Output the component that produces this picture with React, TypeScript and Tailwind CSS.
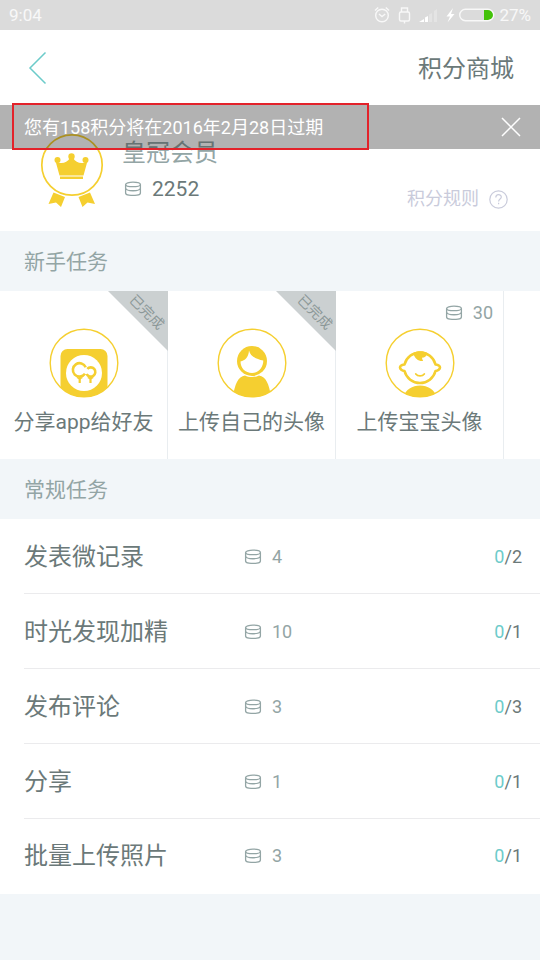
import React from 'react';

const newbieTasks = [
  { title: '分享app给好友', icon: 'app', done: true, points: 0 },
  { title: '上传自己的头像', icon: 'mother', done: true, points: 0 },
  { title: '上传宝宝头像', icon: 'baby', done: false, points: 30 },
];

const dailyTasks = [
  { title: '发表微记录', points: 4, current: 0, total: 2 },
  { title: '时光发现加精', points: 10, current: 0, total: 1 },
  { title: '发布评论', points: 3, current: 0, total: 3 },
  { title: '分享', points: 1, current: 0, total: 1 },
  { title: '批量上传照片', points: 3, current: 0, total: 1 },
];

const CoinIcon = () => (
  <svg width="18" height="16" viewBox="0 0 18 16" fill="none" stroke="#93a5a5" strokeWidth="1.3" aria-hidden="true">
    <ellipse cx="9" cy="3.4" rx="7.4" ry="2.3" />
    <path d="M1.6 3.4v8.6c0 1.3 1.2 2 3.400 2.200 2.600.3 5.400.3 8 0 2.200-.2 3.400-.9 3.400-2.200V3.400" />
    <path d="M1.600 7.400c.8 3.100 14 3.100 14.800 0" />
  </svg>
);

const StatusBar = () => (
  <div className="flex h-[30px] items-center justify-between bg-[#dbdbdb] px-[9px] text-[17px] leading-5 font-normal text-white/80">
    <span>9:04</span>
    <div className="flex items-center">
      <svg width="126" height="20" viewBox="0 0 126 20" fill="none" stroke="#f8f8f8" strokeWidth="1.4" aria-hidden="true">
        {/* Alarm */}
        <circle cx="9" cy="10.500" r="6.300" />
        <path d="M6 9l3 2.600L12.200 9M2 5.500l3.200-3M16 5.500l-3.200-3" />
        {/* Lock */}
        <rect x="26.500" y="7" width="10" height="9" rx="1.500" />
        <path d="M28.500 7V3h6v4M31.500 16v2.500" />
        {/* Signal */}
        <g fill="#fff" stroke="none">
          <path d="M46 17l5-3v3z" />
          <path d="M52 17v-4.500l3-1.500V17z" />
          <path opacity=".25" d="M56 17v-7.500l3-1.500V17zM61 17V6l3-2v13z" />
        </g>
        {/* Charging */}
        <path fill="#fff" stroke="none" d="M80 3l-6.500 8.500h3.500L74.500 17.500l7-8.500h-3.500z" />
        <path fill="#43c20a" stroke="none" d="M111 5h4.500a5 5 0 0 1 0 10H111z" />
        <rect x="86.700" y="4.200" width="34" height="11.600" rx="5.800" />
      </svg>
      <span>27%</span>
    </div>
  </div>
);

const MedalIcon = () => (
  <svg width="64" height="76" viewBox="0 0 64 76" fill="#f5cf30" aria-hidden="true">
    <circle cx="32" cy="32" r="30.200" fill="none" stroke="#f5cf30" strokeWidth="1.700" />
    <circle cx="17.500" cy="27" r="3" />
    <circle cx="31.500" cy="23.500" r="3.200" />
    <circle cx="45.500" cy="27" r="3" />
    <path d="M15.500 28c5 3.500 11 2.500 14.500-3h3c3.500 5.500 9.500 6.500 14.500 3l-4 14.500h-24zM20 43.500h23V46H20z" />
    <path d="M13.500 59.500l11.500 4.500-4 10-5-4.500-7.500 1.500zM50 59.500L38.500 64l4 10 5-4.500L55 71z" />
  </svg>
);

const TaskIcon = ({ name }: { name: string }) => (
  <svg width="70" height="70" viewBox="0 0 70 70" fill="#f5cf30" aria-hidden="true">
    <defs>
      <clipPath id={`clip-${name}`}>
        <circle cx="35" cy="35" r="34" />
      </clipPath>
    </defs>
    <circle cx="35" cy="35" r="33.800" fill="none" stroke="#f5cf30" strokeWidth="1.400" />
    <g clipPath={`url(#clip-${name})`}>
      {name === 'app' && (
        <>
          <rect x="11.500" y="21" width="47" height="60" rx="7" />
          <circle cx="35" cy="45" r="18" fill="#fff" />
          <g fill="none" stroke="#f5cf30" strokeWidth="2.600">
            <path d="M36 45.800A6.700 6.700 0 1 1 36.700 39.200" />
            <path d="M38.300 40.900A4.600 4.600 0 1 1 37.600 46" />
            <path strokeWidth="2.200" d="M30.700 48v7M41.500 48v7" />
            <path strokeWidth="1.400" d="M28 49.300l2.700 1.700 2.700-1.700M38.800 49.300l2.700 1.700 2.700-1.700" />
          </g>
        </>
      )}
      {name === 'mother' && (
        <>
          <circle cx="35" cy="33" r="15" />
          <path fill="#fff" d="M23.500 33.500c4.500-1 8-4 8.500-11 1 5 5.500 8 14.300 10 0 6.500-4.500 12.500-11.300 12.500s-11.500-5-11.500-11.500z" />
          <path d="M16 68c2-12 5-19.500 12-20.500 4 2 10 2 14 0 7 1 10 8.500 12 20.500v4H16z" />
        </>
      )}
      {name === 'baby' && (
        <>
          <path
            fill="none"
            stroke="#f5cf30"
            strokeWidth="2.600"
            strokeLinejoin="round"
            d="M19.500 36.500a16 16 0 0 1 31 0c2.500.3 4.500 1.600 4.500 3s-2 3.200-4.500 3.500a16 16 0 0 1-31 0c-2.500-.3-4.500-2.100-4.500-3.500s2-2.700 4.500-3z"
          />
          <path d="M28 25c4-2.500 11-2.500 14.500 0-1.200 3.500-3 4.800-5.500 4.800.2 1.200.5 2.200 1.200 3.200-4.700.5-8.200-2-10.200-8z" />
          <path fill="none" stroke="#f5cf30" strokeWidth="1.800" strokeLinecap="round" d="M30.800 46c2 2.600 6.500 2.600 8.500 0" />
          <path d="M18 70c2-8 9-12.500 17-12.500S50 62 52 70z" />
        </>
      )}
    </g>
  </svg>
);

const SectionTitle = ({ children }: { children: React.ReactNode }) => (
  <h2 className="flex h-[60px] items-center bg-[#f2f6f9] px-6 pt-0.5 text-[21px] leading-6 text-[#93a5a5]">{children}</h2>
);

const App = () => {
  return (
    <div className="min-h-screen bg-[#f2f6f9] font-['Roboto','Noto_Sans_CJK_SC',sans-serif] font-[370] text-[#6b7979]">
      <StatusBar />

      {/* Header */}
      <header className="flex h-[75px] items-center justify-between bg-white px-[26px]">
        <button type="button" aria-label="返回">
          <svg width="24" height="34" viewBox="0 0 24 34" fill="none" stroke="#6ccbca" strokeWidth="1.500">
            <path d="M19.500 1.500L4 17l15.500 15.500" />
          </svg>
        </button>
        <h1 className="pt-0.5 text-2xl leading-8">积分商城</h1>
      </header>

      {/* Member profile */}
      <section className="relative bg-white">
        <div className="flex h-[126px] items-start pr-8 pl-10 pt-7">
          <MedalIcon />
          <div className="ml-[18px] flex-1">
            <p className="text-2xl leading-10 text-[#93a5a5]">皇冠会员</p>
            <p className="flex items-center gap-2.5 pl-0.5 text-[21px] leading-8">
              <CoinIcon />
              2252
            </p>
          </div>
          <button type="button" className="mt-[52px] flex items-center gap-2.5 text-lg leading-7 text-[#c9cbdb]">
            积分规则
            <svg width="19" height="19" viewBox="0 0 19 19" fill="none" stroke="#c9cbdb" strokeWidth="1.200" aria-hidden="true">
              <circle cx="9.500" cy="9.500" r="8.700" />
              <path d="M6.800 7.500c0-3.800 5.500-3.600 5.500-.4 0 2-2.700 2-2.700 4.400M9.600 12.800v1.500" />
            </svg>
          </button>
        </div>

        {/* Expiry notice */}
        <div className="absolute inset-x-0 top-0 flex h-11 items-center justify-between bg-black/30 pr-[18px] pl-6 text-lg leading-6 text-white">
          <span className="pt-0.5">您有158积分将在2016年2月28日过期</span>
          <button type="button" aria-label="关闭">
            <svg width="22" height="22" viewBox="0 0 22 22" stroke="#fff" strokeWidth="1.500">
              <path d="M2 2l18 18M20 2L2 20" />
            </svg>
          </button>
        </div>
        <div className="pointer-events-none absolute -top-0.5 left-3 h-[47px] w-[357px] border-2 border-[#e3222a]" />
      </section>

      <SectionTitle>新手任务</SectionTitle>

      {/* Newbie tasks */}
      <div className="flex overflow-hidden bg-white">
        {newbieTasks.map((task) => (
          <div
            key={task.title}
            className="relative flex h-[168px] w-[168px] shrink-0 flex-col items-center border-r border-[#e9edf0] pt-[37px]"
          >
            <TaskIcon name={task.icon} />
            <p className="mt-2 text-[21px] leading-8 whitespace-nowrap">{task.title}</p>
            {task.done ? (
              <span className="absolute top-0 -right-px flex size-[60px] items-center justify-center bg-[#cbd0d1] pb-[18px] pl-[18px] [clip-path:polygon(0_0,100%_0,100%_100%)]">
                <span className="rotate-45 text-sm leading-5 whitespace-nowrap text-[#8b9898]">已完成</span>
              </span>
            ) : (
              <span className="absolute top-2.5 right-2.5 flex items-center gap-2.5 text-lg leading-6 text-[#93a5a5]">
                <CoinIcon />
                {task.points}
              </span>
            )}
          </div>
        ))}
      </div>

      <SectionTitle>常规任务</SectionTitle>

      {/* Daily tasks */}
      <ul className="bg-white pl-6">
        {dailyTasks.map((task) => (
          <li
            key={task.title}
            className="flex h-[75px] items-center border-b border-[#ebebed] pt-0.5 pr-[18px] last:border-b-0 last:pb-1"
          >
            <span className="w-[220px] text-2xl leading-8">{task.title}</span>
            <span className="flex flex-1 items-center gap-2.5 text-lg leading-6 text-[#93a5a5]">
              <CoinIcon />
              {task.points}
            </span>
            <span className="text-lg leading-6">
              <span className="text-[#6ccbca]">{task.current}</span>/{task.total}
            </span>
          </li>
        ))}
      </ul>
    </div>
  );
};

export default App;
